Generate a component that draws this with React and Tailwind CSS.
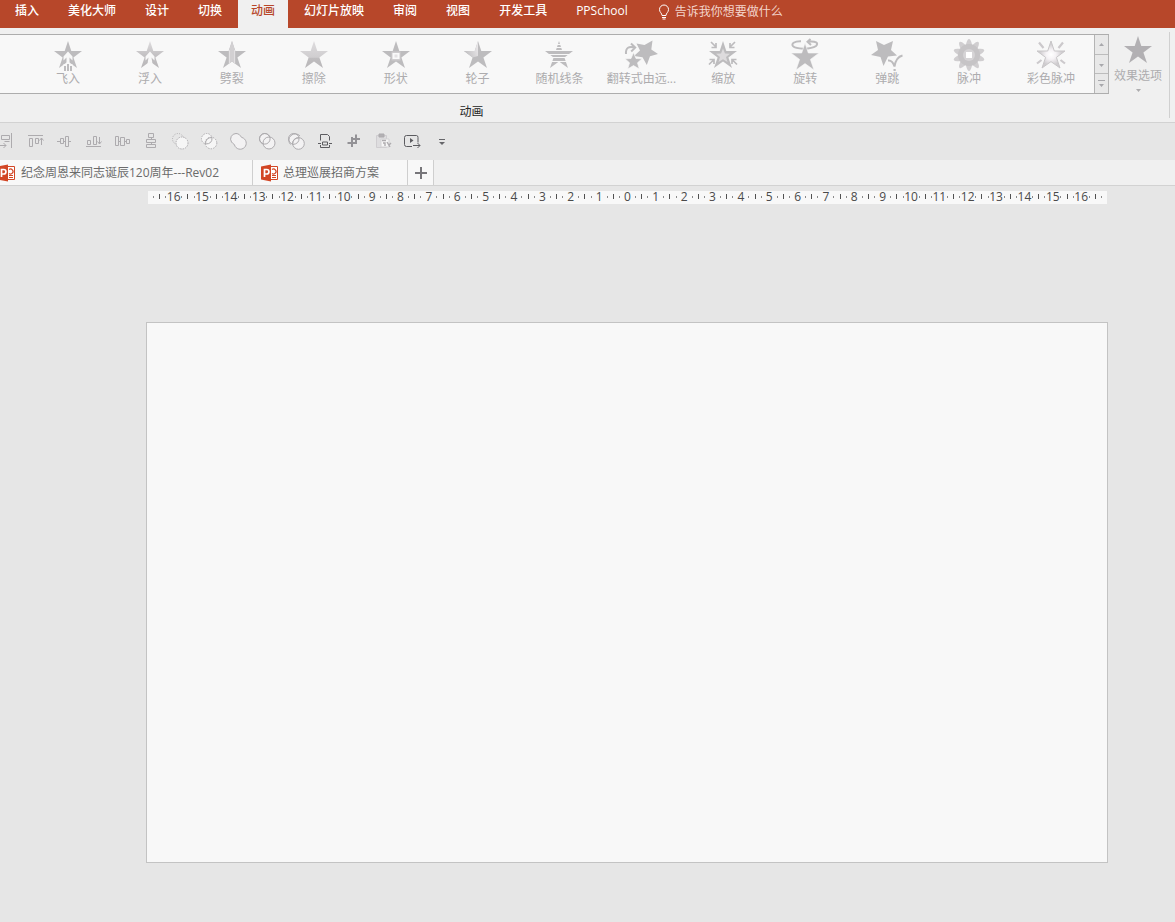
import { Fragment } from "react";

const STAR =
  "M16 2 L19.3 12 H30 L21.4 18.4 L25 29 L16 22.6 L7 29 L10.6 18.4 L2 12 H12.7 Z";

const tabs = [
  "插入",
  "美化大师",
  "设计",
  "切换",
  "动画",
  "幻灯片放映",
  "审阅",
  "视图",
  "开发工具",
  "PPSchool",
];

const effects = [
  {
    name: "飞入",
    art: (
      <>
        <path d={STAR} />
        <path d="M16 12.5 L20.5 17.5 V21.5 L17.5 18.5 V25 H20.5 V33 H11.5 V25 H14.5 V18.5 L11.5 21.5 V17.500 Z" fill="#f8f8f8" />
        <path d="M12 27h2v5h-2z M15 25h2v7h-2z M18 27h2v5h-2z" />
      </>
    ),
  },
  {
    name: "浮入",
    art: (
      <>
        <path d={STAR} fill="url(#fadeTop)" />
        <path d="M16 12.5 L20.500 17.500 V21.500 L17.500 18.500 L18.500 25 L16 23 L13.500 25 L14.500 18.500 L11.500 21.500 V17.500 Z" fill="#f8f8f8" />
      </>
    ),
  },
  {
    name: "劈裂",
    art: (
      <>
        <path d={STAR} />
        <path d="M16 2 L19.3 12 V24.8 L16 22.6 L12.7 24.8 V12 Z" fill="#d2d0d2" />
        <path d="M13.500 11 V24 M18.500 11 V24" stroke="#e2e0e2" />
      </>
    ),
  },
  { name: "擦除", art: <path d={STAR} fill="url(#wipe)" /> },
  {
    name: "形状",
    art: (
      <>
        <path d={STAR} />
        <path d="M11.500 12.500h9v9h-9z" fill="#cfcdcf" />
        <path d="M12.500 14h7v6h-7z" fill="#fafafa" />
        <path d="M14.500 15.500h3v3h-3z" fill="#e4e2e4" />
      </>
    ),
  },
  {
    name: "轮子",
    art: (
      <>
        <path d={STAR} />
        <path d="M16 2 V17 L10.6 18.4 L2 12 H12.7 Z" fill="url(#wheel)" />
      </>
    ),
  },
  {
    name: "随机线条",
    art: (
      <>
        <path d={STAR} />
        <path d="M10 5.500h12 M10 8.500h12 M10 11.500h12 M6 15.500h20 M6 18.500h20 M6 22.500h20" stroke="#f8f8f8" />
      </>
    ),
  },
  {
    name: "翻转式由远...",
    art: (
      <>
        <path d="M11.5 4.5 L19.5 6 L27.5 1.5 L26.3 10.5 L33 15 L25 17.2 L21.8 26 L17.5 18.300 L9 17 L15 11.500 Z" />
        <path d="M8.500 13.500 L11 19.500 L17 19.800 L12.500 23.800 L14.300 30 L8.500 26.600 L2.700 30 L4.500 23.800 L0 19.800 L6 19.500 Z" stroke="#f8f8f8" strokeWidth=".7" />
        <path d="M1 15 C.5 8.500 4 7 9.500 8.500 M6 4.500 L10.200 8.600 L6.200 12.500" fill="none" stroke="#bdbcbe" strokeWidth="2" />
      </>
    ),
  },
  {
    name: "缩放",
    art: (
      <>
        <path d={STAR} />
        <path d="M16 9.500 L18 14.500 L23 14.700 L19 18 L20.500 23 L16 20.200 L11.500 23 L13 18 L9 14.700 L14 14.500 Z" fill="#dddbdd" />
        <path d="M4 3 L9 8 M9 4v4.500H4.500 M28 3 L23 8 M23 4v4.500h4.500 M2 25.500 L6.500 21 M2.500 20.500H7V25 M30 25.500 L25.500 21 M29.500 20.500H25V25" fill="none" stroke="#bdbcbe" strokeWidth="1.700" />
      </>
    ),
  },
  {
    name: "旋转",
    art: (
      <>
        <path d="M12 2.200 C5 2 2 5 4 7.200 C7 10.500 22 10.500 27 7 C30 4 27 2 19 2.800 M21.500 0 L18.500 2.800 L22 6" fill="none" stroke="#bdbcbe" strokeWidth="2" />
        <path d={STAR} transform="translate(0 2)" stroke="#f8f8f8" strokeWidth=".6" />
      </>
    ),
  },
  {
    name: "弹跳",
    art: (
      <>
        <path d="M5 2 L13 6 L22 2 L20 11 L26 16.500 L17 17.500 L12.500 27 L9.500 18 L0 16 L7 11 Z" />
        <path d="M17 21.500 Q21.500 21 23.500 27.500 Q25 18 31.500 16.500" fill="none" stroke="#bdbcbe" strokeWidth="2" />
        <path d="M22.500 30h2.200v2h-2.200z" />
      </>
    ),
  },
  {
    name: "脉冲",
    art: (
      <>
        {[0, 36, 72, 108, 144].map((deg) => (
          <ellipse key={deg} cx="16" cy="16" rx="4" ry="16" transform={`rotate(${deg} 16 16)`} fill="#d0ced0" />
        ))}
        <circle cx="16" cy="16" r="11" fill="#c6c4c6" />
        <circle cx="16" cy="16" r="6" fill="#d6d4d6" />
        <path d="M13 13h6v6h-6z" fill="#fff" />
      </>
    ),
  },
  {
    name: "彩色脉冲",
    art: (
      <>
        <path d={STAR} fill="url(#glow)" stroke="#c8c6c8" />
        <path d="M4 3.500 L8.500 9 M28 3.500 L23.500 9 M2 24.500 L6.500 21 M30 24.500 L25.500 21" stroke="#ccc9cc" strokeWidth="2.200" />
      </>
    ),
  },
];

const tools = [
  {
    name: "右对齐",
    art: <path d="M14.500 1v15 M4.500 3.500h8v4h-8z M3 13.500h6 M6.500 11 L9 13.500 L6.500 16 M7.500 9.500h5" />,
  },
  {
    name: "顶端对齐",
    art: <path d="M2 3.500h15 M3.500 6.500h3v8h-3z M9.500 6.500h3v5h-3z M15.500 13V6 M13.500 8.500 L15.500 6 L17.500 8.500" />,
  },
  {
    name: "垂直居中",
    art: <path d="M2 9.500h3 M8 9.500h2 M13 9.500h3 M5.500 6.500h3v5h-3z M10.500 4.500h3v10h-3z" />,
  },
  {
    name: "底端对齐",
    art: <path d="M2 14.500h15 M3.500 8.500h3v4h-3z M9.500 4.500h3v8h-3z M15.500 5v7 M13.500 9.500 L15.500 12 L17.500 9.500" />,
  },
  {
    name: "横向分布",
    art: <path d="M2.500 4.500h3v9h-3z M7.500 5.500h4v8h-4z M13.500 7.500h3v4h-3z M5.500 9.500h2 M11.500 9.500H14" />,
  },
  {
    name: "纵向分布",
    art: <path d="M6.500 1.500h5v4h-5z M4.500 7.500h9v3h-9z M4.500 12.500h9v3h-9z M9.500 5.500v2 M9.500 10.500v2" />,
  },
  {
    name: "剪除形状",
    art: (
      <>
        <circle cx="7" cy="7" r="5.500" strokeDasharray="1 1.400" />
        <circle cx="11" cy="11" r="6" fill="#f6f6f6" strokeDasharray="1.400 1" />
      </>
    ),
  },
  {
    name: "相交形状",
    art: (
      <>
        <circle cx="6.800" cy="6.800" r="5.300" fill="#f6f6f6" strokeDasharray="1.400 1.200" />
        <circle cx="11" cy="11" r="5.800" fill="#f6f6f6" strokeDasharray="1.400 1.200" />
        <path d="M5.500 12 Q5.500 5.500 12 5.500 Q12.500 12 5.500 12 Z" />
      </>
    ),
  },
  {
    name: "联合形状",
    art: <path d="M7 1.500 A5.500 5.500 0 0 0 2.500 10 C4 12 5 11.500 5.500 13 A6 6 0 1 0 13 5.500 C11.500 5 12 4 10.500 2.800 A5.500 5.500 0 0 0 7 1.500 Z" fill="#f3f2f3" />,
  },
  {
    name: "组合形状",
    art: (
      <>
        <circle cx="6.800" cy="6.800" r="5.300" fill="#f3f2f3" />
        <circle cx="11" cy="11" r="6" fill="#f3f2f3" />
        <circle cx="6.800" cy="6.800" r="5.300" />
      </>
    ),
  },
  {
    name: "拆分形状",
    art: (
      <>
        <circle cx="6.800" cy="6.800" r="5.300" fill="#f3f2f3" />
        <circle cx="11.500" cy="11.500" r="5.800" fill="#f3f2f3" />
        <path d="M3.500 12.500 A6 6 0 0 1 13 4 M5.500 12.500 Q5.500 6 12 5.800 Q12.500 12 5.500 12.500 Z" />
      </>
    ),
  },
  {
    name: "页面设置",
    art: (
      <g stroke="#5c5c60">
        <path d="M4.500 8.500v-6h7l2 2v4 M4.500 13v2.500h9V13 M2 11.500h3 M13 11.500h3" />
        <path d="M6.500 10h5v3h-5z" />
      </g>
    ),
  },
  {
    name: "裁剪",
    art: <path d="M6 7h9 M11 2.500v9.500 M7 5v10 M2.500 11H12" stroke="#939296" strokeWidth="2" />,
  },
  {
    name: "选择性粘贴",
    art: (
      <>
        <path d="M2.500 3.500h10v12h-10z" stroke="#cfcdd0" fill="#dedddf" />
        <path d="M5 2h5v3H5z" fill="#b3b1b4" />
        <path d="M7 7h8v8H7z" fill="#f6f6f6" stroke="#d3d2d4" />
        <path d="M8 8.500h4 M9 11h2v3 M13 10l3 5 M15 13l2-2" stroke="#aeacaf" strokeWidth="1.400" />
      </>
    ),
  },
  {
    name: "从当前幻灯片开始",
    art: (
      <g stroke="#5c5c60">
        <path d="M9 14.500H3.500q-2 0-2-2v-7q0-2 2-2h10q1.500 0 1.500 2v5 M10 13.500h7 M14.500 11l2.500 2.500-2.500 2.500" />
        <path d="M7 6v5l3.500-2.500z" fill="#5c5c60" stroke="none" />
      </g>
    ),
  },
  {
    name: "自定义快速访问工具栏",
    art: (
      <>
        <path d="M7 7.500h6" stroke="#66666a" />
        <path d="M7 10h6l-3 3z" fill="#66666a" stroke="none" />
      </>
    ),
  },
];

const rulerMarks = Array.from({ length: 33 }, (_, i) => Math.abs(i - 16));

const Defs = () => (
  <svg width="0" height="0" className="absolute" aria-hidden="true">
    <defs>
      <linearGradient id="fadeTop" x1="0" y1="0" x2="0" y2="1">
        <stop offset="0" stopColor="#dedcde" />
        <stop offset=".5" stopColor="#c4c2c4" />
        <stop offset="1" stopColor="#b8b6b8" />
      </linearGradient>
      <linearGradient id="wipe" x1="0" y1="0" x2="0" y2="1">
        <stop offset="0" stopColor="#dedcde" />
        <stop offset=".6" stopColor="#d0ced0" />
        <stop offset=".65" stopColor="#bfbdbf" />
        <stop offset="1" stopColor="#bab8ba" />
      </linearGradient>
      <linearGradient id="wheel" x1="0" y1=".8" x2="1" y2=".4">
        <stop offset="0" stopColor="#bdbcbe" />
        <stop offset="1" stopColor="#e8e6e8" />
      </linearGradient>
      <radialGradient id="glow">
        <stop offset="0" stopColor="#ffffff" />
        <stop offset=".35" stopColor="#f5f2f5" />
        <stop offset=".8" stopColor="#cfcccf" />
      </radialGradient>
    </defs>
  </svg>
);

const PptIcon = () => (
  <svg width="17" height="18" viewBox="0 0 17 18" className="shrink-0" aria-hidden="true">
    <path d="M9 2.500h7.500v13H9z" fill="#fff" stroke="#d24625" />
    <path d="M11 5.500a2.500 2.500 0 1 1 0 4 M11 11.500h4 M11 13.500h4" fill="none" stroke="#d24625" strokeWidth="1.200" />
    <path d="M0 2.500 L10 .5 V17.500 L0 15.500 Z" fill="#d24625" />
    <path d="M3.500 13V5.500h2.200a2 2 0 0 1 0 4.500H3.500" fill="none" stroke="#fff" strokeWidth="1.700" />
  </svg>
);

const MenuBar = () => (
  <nav className="flex h-7 gap-[3px] bg-[#b7472a] pl-[2px] text-white">
    {tabs.map((tab) => (
      <button
        key={tab}
        className={`px-[13px] pb-[6px] font-medium whitespace-nowrap ${
          tab === "动画" ? "bg-[#f0f0f0] text-[#b7472a]" : ""
        }`}
      >
        {tab}
      </button>
    ))}
    <label className="flex items-center gap-[5px] pb-1 pl-[14px] text-[#f3d5cc]">
      <svg width="12" height="16" viewBox="0 0 12 16" fill="none" stroke="#fff" aria-hidden="true">
        <path d="M4 11.500 C4 9 1.500 8.500 1.500 5.500 A4.500 4.500 0 0 1 10.500 5.500 C10.500 8.500 8 9 8 11.500 Z M4 13.500h4 M4.500 15h3" />
      </svg>
      <input
        aria-label="告诉我你想要做什么"
        placeholder="告诉我你想要做什么"
        className="w-40 bg-transparent outline-none placeholder:text-[#f3d5cc]"
      />
    </label>
  </nav>
);

const Ribbon = () => (
  <section className="border-b border-[#d2d2d2] bg-[#f0f0f0] pt-1 text-[#adacae]">
    <div className="flex">
      <div className="min-w-0 flex-1 pt-[2px]">
        <div className="flex h-[60px] border-y border-[#adadad] bg-[#f8f8f8]">
          <div className="flex min-w-0 flex-1 pr-[2px] pl-[27px]">
            {effects.map((effect) => (
              <button key={effect.name} className="flex min-w-0 flex-1 flex-col items-center pt-1">
                <svg width="32" height="32" viewBox="0 0 32 32" fill="#bdbcbe" className="shrink-0 overflow-visible" aria-hidden="true">
                  {effect.art}
                </svg>
                <span className="leading-4 whitespace-nowrap">{effect.name}</span>
              </button>
            ))}
          </div>
          <div className="flex w-[15px] flex-col divide-y divide-[#bcbcbc] border-x border-[#b4b4b4] bg-[#e8e8e8]">
            {[
              ["向上", "M4 8h5l-2.500-3z"],
              ["向下", "M4 6h5l-2.500 3z"],
              ["其他", "M3 3h7v1H3z M4 7h5l-2.500 3z"],
            ].map(([name, d]) => (
              <button key={name} aria-label={name} className="flex flex-1 items-center justify-center">
                <svg width="13" height="13" viewBox="0 0 13 13" fill="#a8a8ac" aria-hidden="true">
                  <path d={d} />
                </svg>
              </button>
            ))}
          </div>
        </div>
        <h2 className="pt-2 pr-[166px] text-center leading-5 text-[#262626]">动画</h2>
      </div>
      <button className="mr-[5px] mb-1 flex w-[61px] flex-col items-center border-r border-[#d0d0d0] pt-[2px] pr-[2px]">
        <svg width="32" height="32" viewBox="0 0 32 32" fill="#b2b0b3" aria-hidden="true">
          <path d={STAR} />
        </svg>
        <span className="pt-[2px] leading-4 whitespace-nowrap">效果选项</span>
        <svg width="7" height="10" viewBox="0 0 7 10" aria-hidden="true">
          <path d="M1 5h5l-2.500 3z" fill="#adacae" />
        </svg>
      </button>
    </div>
  </section>
);

const QuickTools = () => (
  <div className="flex h-[37px] items-center overflow-hidden pb-[2px]">
    <div className="-ml-[9px] flex">
      {tools.map((tool) => (
        <button key={tool.name} aria-label={tool.name} className="flex w-[29px] justify-center">
          <svg width="18" height="18" viewBox="0 0 18 18" fill="none" stroke="#adabae" aria-hidden="true">
            {tool.art}
          </svg>
        </button>
      ))}
    </div>
  </div>
);

const DocumentTabs = () => (
  <div className="flex h-[26px] border-b border-[#d2d2d2] bg-[#f0f0f0] text-[#6b6b6b]">
    <button className="-ml-[2px] flex w-[255px] items-center gap-[6px] border-r border-[#cfcfcf] bg-[#f8f8f8] whitespace-nowrap">
      <PptIcon />
      纪念周恩来同志诞辰120周年---Rev02
    </button>
    <button className="flex w-[155px] items-center gap-[5px] border-r border-[#cfcfcf] bg-[#f8f8f8] pl-2 whitespace-nowrap">
      <PptIcon />
      总理巡展招商方案
    </button>
    <button aria-label="新建" className="flex w-[26px] items-center justify-center border-r border-[#cfcfcf] bg-[#f8f8f8]">
      <svg width="12" height="12" viewBox="0 0 12 12" stroke="#77767a" strokeWidth="2" aria-hidden="true">
        <path d="M6 0v12 M0 6h12" />
      </svg>
    </button>
  </div>
);

const Tick = () => <span className="h-[5px] w-px shrink-0 bg-[#505050]" />;
const Dot = () => <span className="h-[2px] w-px shrink-0 bg-[#8a8a8a]" />;

const Ruler = () => (
  <div className="mr-px ml-[2px] flex h-[13px] items-center bg-[#f8f8f8] pb-[2px] text-[#4a4a4a]">
    <div className="flex w-[11px] justify-center">
      <Dot />
    </div>
    {rulerMarks.map((mark, i) => (
      <Fragment key={i}>
        <Tick />
        <div className="flex min-w-0 flex-1 items-center justify-center">
          <Dot />
          <span className="flex w-[15px] justify-center leading-3">{mark}</span>
          <Dot />
        </div>
      </Fragment>
    ))}
    <Tick />
    <div className="flex w-[11px] justify-center">
      <Dot />
    </div>
  </div>
);

const App = () => (
  <div className="min-h-screen bg-[#e6e6e6] font-['Open_Sans','Noto_Sans_CJK_SC',sans-serif] text-[12px]">
    <Defs />
    <MenuBar />
    <Ribbon />
    <QuickTools />
    <DocumentTabs />
    <main className="pt-[5px] pr-[67px] pb-14 pl-[146px]">
      <Ruler />
      <div className="mt-[118px] aspect-video border border-[#c3c3c3] bg-[#f8f8f8]" />
    </main>
  </div>
);

export default App;
